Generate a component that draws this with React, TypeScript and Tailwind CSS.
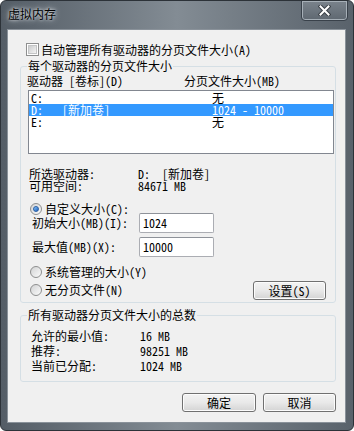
import React from "react";

const font = "font-['Noto_Sans_Mono_CJK_SC','Noto_Sans_CJK_SC',sans-serif]";

function CheckBox() {
    return (
        <span className="flex h-[13px] w-[13px] shrink-0 items-center justify-center border border-[#8e8f8f] bg-white">
            <span className="h-[9px] w-[9px] border border-[#c4c5c6] bg-gradient-to-br from-[#cbcccd] to-[#f4f4f4]" />
        </span>
    );
}

function Radio({ checked = false }: { checked?: boolean }) {
    return (
        <span className="flex h-[12px] w-[12px] shrink-0 items-center justify-center rounded-full border border-[#8e8f8f] bg-gradient-to-br from-[#d2d3d4] to-[#fbfbfb]">
            {checked && (
                <span className="h-[6px] w-[6px] rounded-full border border-[#2a5fa3] bg-gradient-to-br from-[#88c6ff] to-[#1c5fb8]" />
            )}
        </span>
    );
}

function Button({ children, width }: { children: React.ReactNode; width: string }) {
    return (
        <button
            className={`${width} h-[19px] rounded-[3px] border border-[#707070] bg-gradient-to-b from-[#f3f3f3] via-[#e9e9e9] to-[#d4d4d4] text-[12px] leading-[12px] text-black shadow-[inset_0_0_0_1px_#fcfcfc]`}
        >
            {children}
        </button>
    );
}

function TextBox({ value }: { value: string }) {
    return (
        <div className="flex h-[20px] w-[75px] items-center rounded-[2px] border border-[#abadb3] border-t-[#8e9299] bg-white pl-[3px] text-[12px] leading-[12px]">
            {value}
        </div>
    );
}

export default function App() {
    return (
        <div className={`${font} h-[431px] w-[354px] overflow-hidden rounded-[6px] border border-[#2c3238] bg-gradient-to-r from-[#545d66] via-[#838c94] to-[#59626b] text-black`}>
            {/* title bar */}
            <div className="flex h-[28px] items-start justify-between">
                <span className="ml-[7px] mt-[6px] text-[12px] leading-[14px] text-black [text-shadow:0_0_6px_#dfe4e8,0_0_3px_#dfe4e8]">
                    虚拟内存
                </span>
                <div className="mr-[5px] mt-[-1px] flex h-[21px] w-[47px] items-center justify-center rounded-b-[4px] border border-[#39414a] bg-gradient-to-b from-[#7a838c] to-[#5f6871] shadow-[inset_0_0_0_1px_#a6afb7]">
                    <svg width="13" height="11" viewBox="0 0 13 11">
                        <path d="M2.5 1.5 L10.5 9.5 M10.5 1.5 L2.5 9.5" stroke="#3a4047" strokeWidth="4" strokeLinecap="square" />
                        <path d="M2.5 1.5 L10.5 9.5 M10.5 1.5 L2.5 9.5" stroke="#ffffff" strokeWidth="2" strokeLinecap="square" />
                    </svg>
                </div>
            </div>

            {/* client area */}
            <div className="ml-[6px] h-[394px] w-[339px] border border-[#8a929a] bg-[#f0f0f0] pl-[12px] pr-[9px] pt-[13px]">
                <div className="flex h-[13px] items-center">
                    <span className="ml-[6px]"><CheckBox /></span>
                    <span className="ml-[2px] text-[12px] leading-[13px]">自动管理所有驱动器的分页文件大小(A)</span>
                </div>

                <fieldset className="mt-[3px] w-[316px] rounded-[3px] border border-[#d5dfe5] pb-[4px] pl-[6px] pr-[1px]">
                    <legend className="px-[1px] text-[12px] leading-[14px]">每个驱动器的分页文件大小</legend>
                    <div className="flex pt-[1px] text-[12px] leading-[14px]">
                        <span className="w-[157px] whitespace-pre">驱动器 [卷标](D)</span>
                        <span>分页文件大小(MB)</span>
                    </div>
                    <div className="ml-[1px] mt-[2px] h-[64px] w-[306px] border border-[#828790] bg-white pt-[1px] text-[12px] leading-[12px]">
                        <div className="flex h-[12px] pl-[2px]">
                            <span className="w-[181px]">C:</span>
                            <span>无</span>
                        </div>
                        <div className="flex h-[12px] bg-[#3399ff] pl-[2px] text-white">
                            <span className="w-[31px]">D:</span>
                            <span className="w-[150px]">[新加卷]</span>
                            <span className="whitespace-pre">1024 - 10000</span>
                        </div>
                        <div className="flex h-[12px] pl-[2px]">
                            <span className="w-[181px]">E:</span>
                            <span>无</span>
                        </div>
                    </div>

                    <div className="ml-[2px] mt-[14px] text-[12px] leading-[12px]">
                        <div className="flex">
                            <span className="w-[109px]">所选驱动器:</span>
                            <span className="whitespace-pre">D:  [新加卷]</span>
                        </div>
                        <div className="flex">
                            <span className="w-[109px]">可用空间:</span>
                            <span className="whitespace-pre">84671 MB</span>
                        </div>
                    </div>

                    <div className="ml-[3px] mt-[11px] flex h-[12px] items-center">
                        <Radio checked />
                        <span className="ml-[3px] text-[12px] leading-[12px]">自定义大小(C):</span>
                    </div>
                    <div className="ml-[5px] mt-[-2px] flex items-center">
                        <span className="w-[107px] text-[12px] leading-[12px]">初始大小(MB)(I):</span>
                        <TextBox value="1024" />
                    </div>
                    <div className="ml-[5px] mt-[4px] flex items-center">
                        <span className="w-[107px] text-[12px] leading-[12px]">最大值(MB)(X):</span>
                        <TextBox value="10000" />
                    </div>

                    <div className="ml-[3px] mt-[8px] flex h-[13px] items-center">
                        <Radio />
                        <span className="ml-[3px] text-[12px] leading-[12px]">系统管理的大小(Y)</span>
                    </div>
                    <div className="ml-[3px] mt-[1px] flex h-[19px] items-center justify-between">
                        <div className="mt-[2px] flex items-center">
                            <Radio />
                            <span className="ml-[3px] text-[12px] leading-[12px]">无分页文件(N)</span>
                        </div>
                        <div className="mr-[8px]">
                            <Button width="w-[73px]">设置(S)</Button>
                        </div>
                    </div>
                </fieldset>

                <fieldset className="mt-[5px] w-[316px] rounded-[3px] border border-[#d5dfe5] pb-[8px] pl-[6px] pt-[6px]">
                    <legend className="px-[1px] text-[12px] leading-[14px]">所有驱动器分页文件大小的总数</legend>
                    <div className="ml-[4px] text-[12px] leading-[15px]">
                        <div className="flex">
                            <span className="w-[109px]">允许的最小值:</span>
                            <span className="whitespace-pre">16 MB</span>
                        </div>
                        <div className="flex">
                            <span className="w-[109px]">推荐:</span>
                            <span className="whitespace-pre">98251 MB</span>
                        </div>
                        <div className="flex">
                            <span className="w-[109px]">当前已分配:</span>
                            <span className="whitespace-pre">1024 MB</span>
                        </div>
                    </div>
                </fieldset>

                <div className="mt-[11px] flex justify-end gap-[7px]">
                    <Button width="w-[74px]">确定</Button>
                    <Button width="w-[73px]">取消</Button>
                </div>
            </div>
        </div>
    );
}
